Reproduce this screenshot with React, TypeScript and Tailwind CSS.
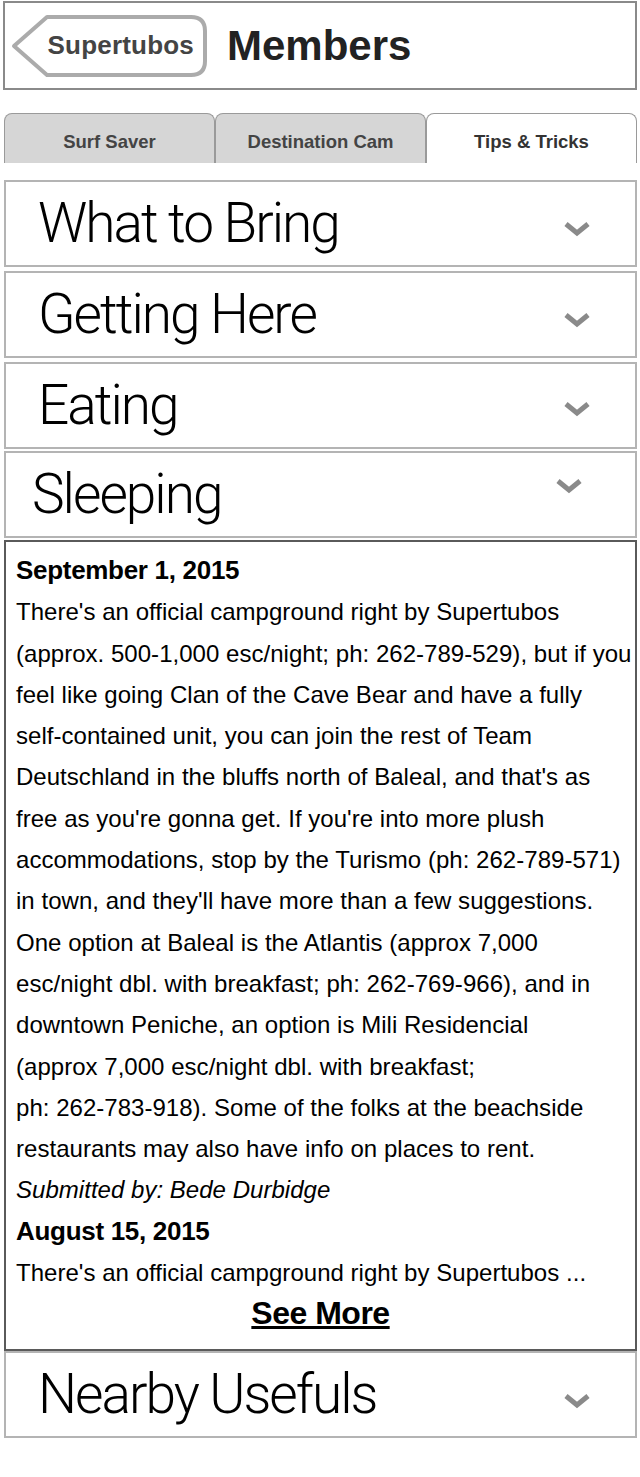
import { FC } from "react";

const lines: string[] = [
  "There's an official campground right by Supertubos",
  "(approx. 500-1,000 esc/night; ph: 262-789-529), but if you",
  "feel like going Clan of the Cave Bear and have a fully",
  "self-contained unit, you can join the rest of Team",
  "Deutschland in the bluffs north of Baleal, and that's as",
  "free as you're gonna get. If you're into more plush",
  "accommodations, stop by the Turismo (ph: 262-789-571)",
  "in town, and they'll have more than a few suggestions.",
  "One option at Baleal is the Atlantis (approx 7,000",
  "esc/night dbl. with breakfast; ph: 262-769-966), and in",
  "downtown Peniche, an option is Mili Residencial",
  "(approx 7,000 esc/night dbl. with breakfast;",
  "ph: 262-783-918). Some of the folks at the beachside",
  "restaurants may also have info on places to rent.",
];

const Chevron: FC = () => (
  <svg width="28" height="16" viewBox="0 0 28 16" className="shrink-0">
    <path d="M3 3 L14 12 L25 3" fill="none" stroke="#8a8a8a" strokeWidth="5" />
  </svg>
);

//one collapsed section row
const Section: FC<{ title: string; chevronClass?: string; textClass?: string }> = ({
  title,
  chevronClass = "",
  textClass = "pl-[32px]",
}) => (
  <div className="flex h-[87px] items-center justify-between border-2 border-[#b4b4b4] pr-[44px]">
    <span
      className={`font-['Roboto',sans-serif] text-[55px] font-light leading-none tracking-[-2px] text-black ${textClass}`}
    >
      {title}
    </span>
    <div className={chevronClass}>
      <Chevron />
    </div>
  </div>
);

const App: FC = () => {
  return (
    <div className="w-[640px] min-h-[1477px] bg-white font-['Liberation_Sans',Arial,sans-serif] text-black">
      {/* header */}
      <div className="mx-[3px] mt-[1px] flex h-[89px] items-center border-2 border-[#8a8a8a]">
        <div className="relative ml-[6px] flex h-[62px] w-[196px] items-center justify-end pr-[13px]">
          <svg
            width="196"
            height="62"
            viewBox="0 0 196 62"
            className="absolute left-0 top-0"
          >
            <path
              d="M36 2 H180 Q194 2 194 16 V46 Q194 60 180 60 H36 L3 31 Z"
              fill="none"
              stroke="#ababab"
              strokeWidth="4"
              strokeLinejoin="round"
            />
          </svg>
          <span className="relative text-[26px] font-bold tracking-[0.2px] text-[#444]">
            Supertubos
          </span>
        </div>
        <span className="ml-[20px] text-[42px] font-bold leading-none text-[#222]">
          Members
        </span>
      </div>

      {/* tabs */}
      <div className="mt-[23px] flex h-[50px] pl-[4px] pr-[3px]">
        <div className="flex w-[211px] items-center justify-center rounded-t-[8px] border border-b-0 border-[#9a9a9a] bg-[#d6d6d6] pt-[6px] text-[18.5px] font-bold text-[#444]">
          Surf Saver
        </div>
        <div className="flex w-[211px] items-center justify-center rounded-t-[8px] border border-b-0 border-[#9a9a9a] bg-[#d6d6d6] pt-[6px] text-[18.5px] font-bold text-[#444]">
          Destination Cam
        </div>
        <div className="flex flex-1 items-center justify-center rounded-t-[8px] border border-b-0 border-[#9a9a9a] bg-white pt-[6px] text-[18.5px] font-bold text-[#333]">
          Tips &amp; Tricks
        </div>
      </div>

      {/* sections */}
      <div className="mt-[17px] flex flex-col pl-[4px] pr-[3px]">
        <Section title="What to Bring" chevronClass="mt-[10px]" />
        <div className="h-[4px]" />
        <Section title="Getting Here" chevronClass="mt-[10px]" />
        <div className="h-[4px]" />
        <Section title="Eating" chevronClass="mt-[6px]" />
        <div className="h-[2px]" />
        <Section title="Sleeping" chevronClass="-mt-[18px] mr-[8px]" textClass="pl-[26px]" />
        <div className="h-[2px]" />

        <div className="border-2 border-[#5a5a5a] pl-[10px] pb-[14px] pt-[8px] text-[24px] leading-[41.3px] tracking-[0.03px]">
          <div className="text-[26px] font-bold tracking-[-0.3px]">September 1, 2015</div>
          {lines.map((line, i) => (
            <div key={i} className="whitespace-nowrap">
              {line}
            </div>
          ))}
          <div className="italic">Submitted by: Bede Durbidge</div>
          <div className="text-[26px] font-bold tracking-[-0.3px]">August 15, 2015</div>
          <div className="whitespace-nowrap">
            There's an official campground right by Supertubos ...
          </div>
          <div className="pr-[10px] text-center text-[32px] font-bold tracking-[-0.5px] underline">
            See More
          </div>
        </div>

        <Section title="Nearby Usefuls" chevronClass="mt-[14px]" />
      </div>
    </div>
  );
};

export default App;
